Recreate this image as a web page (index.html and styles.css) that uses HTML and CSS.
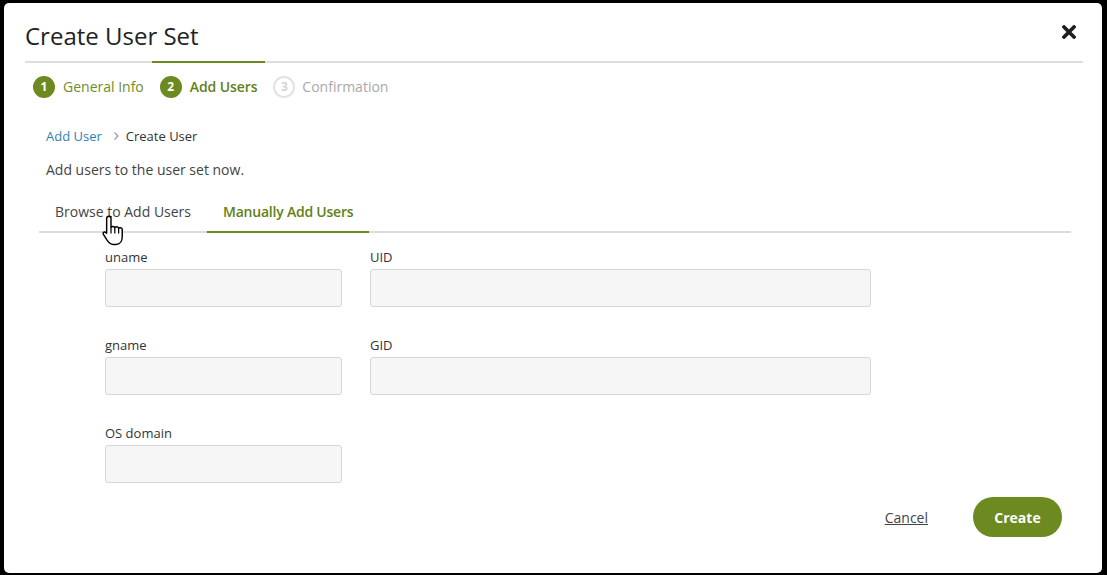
FILE: index.html
```html
<!DOCTYPE html>
<html>
<head>
<meta charset="utf-8">
<link rel="stylesheet" href="styles.css">
</head>
<body>
<div class="modal">
  <div class="header">
    <h1 class="title">Create User Set</h1>
    <button class="close" aria-label="Close">
      <svg width="14" height="14" viewBox="0 0 14 14"><path d="M2 2 L12 12 M12 2 L2 12" stroke="#1e1e1e" stroke-width="3.6" stroke-linecap="square"/></svg>
    </button>
  </div>
  <div class="steps">
    <div class="step done"><span class="num">1</span><span class="label">General Info</span></div>
    <div class="step active"><span class="num">2</span><span class="label">Add Users</span></div>
    <div class="step todo"><span class="num">3</span><span class="label">Confirmation</span></div>
  </div>

  <div class="content">
    <div class="crumbs">
      <a class="crumb-link">Add User</a>
      <svg class="chev" width="7" height="10" viewBox="0 0 7 10"><path d="M1.5 1.5 L5 5 L1.5 8.5" fill="none" stroke="#999" stroke-width="1.2"/></svg>
      <span class="crumb-cur">Create User</span>
    </div>
    <p class="intro">Add users to the user set now.</p>
  </div>

  <div class="tabs">
    <div class="tab">Browse to Add Users</div>
    <div class="tab active">Manually Add Users</div>
    <svg class="cursor" width="27" height="33" viewBox="0 0 26 32">
      <path d="M7.5 2.2 C8.9 2.2 9.6 3.1 9.6 4.4 L9.6 13 C10 11.8 13 11.6 13.3 13.4 C13.8 12 16.8 12 17 14 C17.6 12.9 20.4 13 20.5 15 L20.5 22 C20.5 26 18.4 29.5 14.3 29.5 L11.6 29.5 C8.6 29.5 7.4 27.6 5.8 25.3 L2.2 19.8 C1.4 18.4 2.6 17 4 17.6 L5.4 18.6 L5.4 4.4 C5.4 3.1 6.2 2.2 7.5 2.2 Z" fill="#fff" stroke="#000" stroke-width="1.4" stroke-linejoin="round"/>
      <path d="M13.3 13.4 L13.3 19 M17 14 L17 19 M9.6 13 L9.6 19" fill="none" stroke="#000" stroke-width="1.2"/>
    </svg>
  </div>

  <div class="form">
    <div class="field"><label>uname</label><div class="input"></div></div>
    <div class="field"><label>UID</label><div class="input"></div></div>
    <div class="field"><label>gname</label><div class="input"></div></div>
    <div class="field"><label>GID</label><div class="input"></div></div>
    <div class="field"><label>OS domain</label><div class="input"></div></div>
  </div>

  <div class="footer">
    <a class="cancel">Cancel</a>
    <button class="create">Create</button>
  </div>
</div>
</body>
</html>
```

FILE: styles.css
```css
* { box-sizing: border-box; }
html, body { margin: 0; padding: 0; }
body {
  background: #000;
  width: 1107px;
  height: 575px;
  padding: 3px 5px 2px 4px;
  font-family: "Open Sans", "Noto Sans", sans-serif;
  overflow: hidden;
}
.modal {
  background: #fff;
  width: 1098px;
  height: 570px;
  border-radius: 5px;
  padding: 0 19px 0 21px;
  position: relative;
}
.header {
  display: flex;
  justify-content: space-between;
  align-items: flex-start;
  border-bottom: 2px solid #dedede;
  height: 60px;
}
.title {
  margin: 0;
  padding-top: 17px;
  font-size: 24px;
  font-weight: 400;
  line-height: 32px;
  color: #222;
}
.close {
  border: 0;
  background: none;
  padding: 0;
  margin: 22px 0 0 0;
  width: 14px;
  height: 14px;
  margin-right: 7px;
}
.close svg { display: block; }
.steps {
  display: flex;
  margin-top: -2px;
}
.step {
  display: flex;
  align-items: center;
  padding: 13px 8px 0 8px;
  border-top: 2px solid transparent;
  font-size: 14px;
  line-height: 22px;
}
.step .num {
  width: 22px;
  height: 22px;
  border-radius: 50%;
  display: inline-flex;
  align-items: center;
  justify-content: center;
  font-size: 12px;
  font-weight: 700;
  color: #fff;
  background: #6c8a1f;
  margin-right: 8px;
}
.step.done .label { color: #718c2c; }
.step.active { border-top-color: #6c8a1f; }
.step.active .label { color: #637f18; font-weight: 600; letter-spacing: -0.1px; }
.step.todo .num {
  background: #fff;
  border: 2px solid #e2e2e2;
  color: #d4d4d4;
  margin-right: 7px;
}
.step.todo .label { color: #a9a9a9; }

.content { padding: 29px 0 0 21px; }
.crumbs {
  display: flex;
  align-items: center;
  font-size: 13px;
  line-height: 18px;
}
.crumb-link { color: #2f80b6; }
.chev { margin: 0 6px 0 11px; }
.crumb-cur { color: #333; }
.intro {
  margin: 15px 0 0 0;
  font-size: 14px;
  line-height: 20px;
  color: #444;
}

.tabs {
  display: flex;
  margin: 14px 12px 0 14px;
  border-bottom: 2px solid #dcdcdc;
  position: relative;
}
.tab {
  padding: 8px 16px 9px 16px;
  font-size: 14px;
  line-height: 20px;
  color: #444;
}
.tab.active {
  color: #637f18;
  font-weight: 600;
  letter-spacing: -0.22px;
  border-bottom: 2px solid #6c8a1f;
  margin-bottom: -2px;
}
.cursor {
  position: absolute;
  left: 62px;
  top: 20px;
}

.form {
  display: grid;
  grid-template-columns: 237px 501px;
  column-gap: 28px;
  row-gap: 29px;
  padding: 15px 0 0 80px;
}
.field label {
  display: block;
  font-size: 13px;
  line-height: 18px;
  color: #333;
  margin-bottom: 3px;
}
.input {
  height: 38px;
  background: #f6f6f6;
  border: 1px solid #d6d6d6;
  border-radius: 3px;
}

.footer {
  display: flex;
  justify-content: flex-end;
  align-items: center;
  margin-top: 14px;
  padding-right: 21px;
}
.cancel {
  font-size: 14px;
  color: #444;
  text-decoration: underline;
  margin-right: 45px;
}
.create {
  width: 89px;
  height: 40px;
  border: 0;
  border-radius: 20px;
  background: #6c8a1f;
  color: #fff;
  font-family: "Open Sans", "Noto Sans", sans-serif;
  font-size: 14px;
  font-weight: 700;
}
```
